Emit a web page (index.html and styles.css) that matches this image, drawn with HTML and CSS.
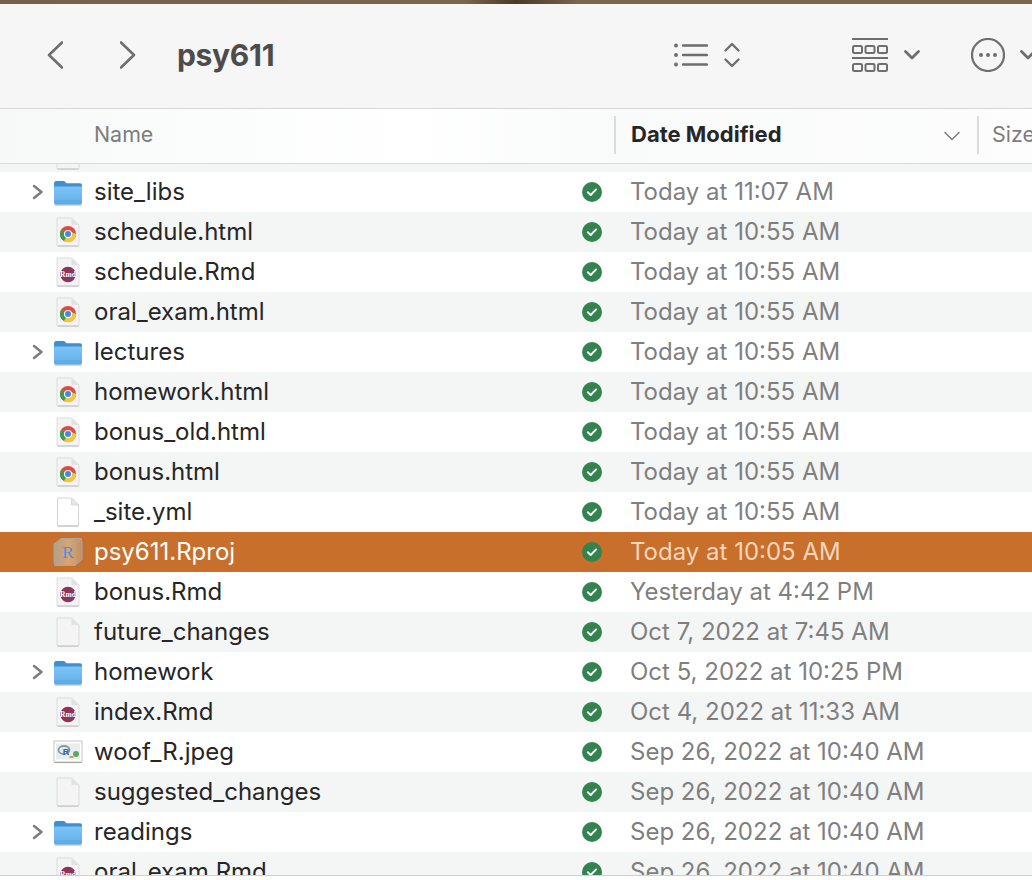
FILE: index.html
```html
<!DOCTYPE html>
<html lang="en">
<head>
<meta charset="utf-8">
<title>psy611</title>
<link rel="stylesheet" href="styles.css">
</head>
<body>
<svg class="defs" aria-hidden="true">
  <defs>
    <linearGradient id="fold" x1="0" y1="0" x2="0" y2="1"><stop offset="0" stop-color="#7cc4f5"/><stop offset="1" stop-color="#62aeea"/></linearGradient>
    <linearGradient id="cube" x1="0" y1="0" x2="1" y2="0"><stop offset="0" stop-color="#b3a08c"/><stop offset=".55" stop-color="#dba371"/><stop offset="1" stop-color="#bd8f68"/></linearGradient>
    <symbol id="folder" viewBox="0 0 30 30">
      <path d="M1 6.500C1 5 2 4 3.300 4h7c1 0 1.500.4 2.200 1.200l1 1.100H27c1.300 0 2 .8 2 2V12H1z" fill="#3f8fd6"/>
      <path d="M1 9.500h28v16.300c0 1.200-.8 2-2 2H3c-1.200 0-2-.8-2-2z" fill="url(#fold)"/>
      <path d="M1 24h28M1 26h28" stroke="#5a9fd8" stroke-width=".7" opacity=".7"/>
      <path d="M1.500 28.300h27" stroke="#9a9a9a" stroke-width=".7" opacity=".7"/>
    </symbol>
    <symbol id="doc" viewBox="0 0 30 30">
      <path d="M4.500 1h14l7 7v20.500h-21z" fill="#fff" stroke="#d4d4d4" stroke-width="1"/>
      <path d="M18.500 1v7h7z" fill="#e6e6e6" stroke="#d4d4d4" stroke-width=".8"/>
      <path d="M5 29.300h20" stroke="#bbb" stroke-width=".8"/>
    </symbol>
    <symbol id="docgrey" viewBox="0 0 30 30">
      <path d="M4 1h14.500l7.500 7v20.500H4z" fill="#f4f4f4" stroke="#dcdcdc" stroke-width="1"/>
      <path d="M18.500 1v7H26z" fill="#e2e2e2"/>
      <path d="M4.500 29.300h21" stroke="#bbb" stroke-width=".8"/>
    </symbol>
    <symbol id="chrome" viewBox="0 0 30 30">
      <use href="#docgrey"/>
      <circle cx="15" cy="17" r="8" fill="#dd4b3e"/>
      <path d="M8 13 15 17l-4 7A8 8 0 0 1 8 13z" fill="#3a9d50"/>
      <path d="M23 17a8 8 0 0 1-12 7l4-7 3.500-2z" fill="#f6c53a"/>
      <circle cx="15" cy="17" r="4" fill="#fff"/>
      <circle cx="15" cy="17" r="3" fill="#4a84ea"/>
    </symbol>
    <symbol id="rmd" viewBox="0 0 30 30">
      <use href="#docgrey"/>
      <circle cx="15" cy="17.500" r="7.800" fill="#8f3358"/>
      <text x="15" y="20" text-anchor="middle" class="rmd-label">Rmd</text>
    </symbol>
    <symbol id="rproj" viewBox="0 0 30 30">
      <path d="M8 1.500h20l1 4v17l-7 6H2l-1-4V7z" fill="url(#cube)" stroke="#a7a7a7" stroke-width="1"/>
      <path d="M1 7h21v21.500M22 7l7-5.500" fill="none" stroke="#c2a68c" stroke-width=".8"/>
      <text x="15" y="21" text-anchor="middle" class="rproj-label">R</text>
    </symbol>
    <symbol id="jpeg" viewBox="0 0 30 30">
      <rect x="1" y="4" width="28" height="21" fill="#fff" stroke="#c6c6c6"/>
      <rect x="3" y="6.500" width="24" height="16" fill="#e8edf0"/>
      <ellipse cx="11" cy="13" rx="5.500" ry="4" fill="none" stroke="#8d949c" stroke-width="1.800"/>
      <text x="13" y="18" text-anchor="middle" class="jpeg-label">R</text>
      <circle cx="23" cy="17" r="3" fill="#5aa662"/>
      <rect x="16.500" y="19" width="4" height="2" fill="#e0963c"/>
      <path d="M1.500 25.600h27" stroke="#8f8f8f" stroke-width=".8"/>
    </symbol>
    <symbol id="sync" viewBox="0 0 20 20">
      <circle cx="10" cy="10" r="10" fill="#33834f"/>
      <path d="M5.800 10.300l2.900 2.700 5.400-5.600" fill="none" stroke="#fff" stroke-width="1.900" stroke-linecap="round" stroke-linejoin="round"/>
    </symbol>
    <symbol id="disc" viewBox="0 0 12 16">
      <path d="M2 2l7.500 6L2 14" fill="none" stroke="#7a7a7a" stroke-width="2.400" stroke-linecap="round" stroke-linejoin="round"/>
    </symbol>
  </defs>
</svg>

<div class="wallpaper"></div>

<header class="toolbar">
  <svg class="nav nav-back" viewBox="0 0 16 28"><path d="M15 1.500 2 14l13 12.500"/></svg>
  <svg class="nav nav-fwd" viewBox="0 0 16 28"><path d="M1 1.500 14 14 1 26.500"/></svg>
  <h1 class="title">psy611</h1>
  <svg class="tool tool-list" viewBox="0 0 34 24">
    <circle cx="2" cy="2.500" r="2"/><circle cx="2" cy="12" r="2"/><circle cx="2" cy="21.500" r="2"/>
    <path d="M9 2.500h24M9 12h24M9 21.500h24"/>
  </svg>
  <svg class="tool tool-updown" viewBox="0 0 16 26"><path d="M1.500 8.500 8 2l6.500 6.500M1.500 17.500 8 24l6.500-6.500"/></svg>
  <svg class="tool tool-grid" viewBox="0 0 36 34">
    <path d="M0 1h36M0 20h36"/>
    <rect x="1" y="8" width="9" height="7" rx="1.500"/><rect x="13.500" y="8" width="9" height="7" rx="1.500"/><rect x="26" y="8" width="9" height="7" rx="1.500"/>
    <rect x="1" y="26" width="9" height="7" rx="1.500"/><rect x="13.500" y="26" width="9" height="7" rx="1.500"/><rect x="26" y="26" width="9" height="7" rx="1.500"/>
  </svg>
  <svg class="tool tool-chev" viewBox="0 0 16 10"><path d="M1.500 1.500 8 8l6.500-6.500"/></svg>
  <svg class="tool tool-more" viewBox="0 0 34 34">
    <circle cx="17" cy="17" r="16"/>
    <circle class="dot" cx="10" cy="17" r="2"/><circle class="dot" cx="17" cy="17" r="2"/><circle class="dot" cx="24" cy="17" r="2"/>
  </svg>
  <svg class="tool tool-chev tool-chev-end" viewBox="0 0 16 10"><path d="M1.500 1.500 8 8l6.500-6.500"/></svg>
</header>

<div class="colhead">
  <span class="col col-name">Name</span>
  <span class="col col-date">Date Modified</span>
  <svg class="sort" viewBox="0 0 16 10"><path d="M1 1.500 8 8.500l7-7"/></svg>
  <span class="col col-size">Size</span>
</div>

<main class="list">
  <div class="peek">
    <svg class="ico peek-ico"><use href="#docgrey"/></svg>
  </div>
  <div class="row"><svg class="disc"><use href="#disc"/></svg><svg class="ico"><use href="#folder"/></svg><span class="name">site_libs</span><svg class="sync"><use href="#sync"/></svg><span class="date">Today at 11:07 AM</span></div>
  <div class="row alt"><svg class="ico"><use href="#chrome"/></svg><span class="name">schedule.html</span><svg class="sync"><use href="#sync"/></svg><span class="date">Today at 10:55 AM</span></div>
  <div class="row"><svg class="ico"><use href="#rmd"/></svg><span class="name">schedule.Rmd</span><svg class="sync"><use href="#sync"/></svg><span class="date">Today at 10:55 AM</span></div>
  <div class="row alt"><svg class="ico"><use href="#chrome"/></svg><span class="name">oral_exam.html</span><svg class="sync"><use href="#sync"/></svg><span class="date">Today at 10:55 AM</span></div>
  <div class="row"><svg class="disc"><use href="#disc"/></svg><svg class="ico"><use href="#folder"/></svg><span class="name">lectures</span><svg class="sync"><use href="#sync"/></svg><span class="date">Today at 10:55 AM</span></div>
  <div class="row alt"><svg class="ico"><use href="#chrome"/></svg><span class="name">homework.html</span><svg class="sync"><use href="#sync"/></svg><span class="date">Today at 10:55 AM</span></div>
  <div class="row"><svg class="ico"><use href="#chrome"/></svg><span class="name">bonus_old.html</span><svg class="sync"><use href="#sync"/></svg><span class="date">Today at 10:55 AM</span></div>
  <div class="row alt"><svg class="ico"><use href="#chrome"/></svg><span class="name">bonus.html</span><svg class="sync"><use href="#sync"/></svg><span class="date">Today at 10:55 AM</span></div>
  <div class="row"><svg class="ico"><use href="#doc"/></svg><span class="name">_site.yml</span><svg class="sync"><use href="#sync"/></svg><span class="date">Today at 10:55 AM</span></div>
  <div class="row selected"><svg class="ico"><use href="#rproj"/></svg><span class="name">psy611.Rproj</span><svg class="sync"><use href="#sync"/></svg><span class="date">Today at 10:05 AM</span></div>
  <div class="row"><svg class="ico"><use href="#rmd"/></svg><span class="name">bonus.Rmd</span><svg class="sync"><use href="#sync"/></svg><span class="date">Yesterday at 4:42 PM</span></div>
  <div class="row alt"><svg class="ico"><use href="#docgrey"/></svg><span class="name">future_changes</span><svg class="sync"><use href="#sync"/></svg><span class="date">Oct 7, 2022 at 7:45 AM</span></div>
  <div class="row"><svg class="disc"><use href="#disc"/></svg><svg class="ico"><use href="#folder"/></svg><span class="name">homework</span><svg class="sync"><use href="#sync"/></svg><span class="date">Oct 5, 2022 at 10:25 PM</span></div>
  <div class="row alt"><svg class="ico"><use href="#rmd"/></svg><span class="name">index.Rmd</span><svg class="sync"><use href="#sync"/></svg><span class="date">Oct 4, 2022 at 11:33 AM</span></div>
  <div class="row"><svg class="ico"><use href="#jpeg"/></svg><span class="name">woof_R.jpeg</span><svg class="sync"><use href="#sync"/></svg><span class="date">Sep 26, 2022 at 10:40 AM</span></div>
  <div class="row alt"><svg class="ico"><use href="#docgrey"/></svg><span class="name">suggested_changes</span><svg class="sync"><use href="#sync"/></svg><span class="date">Sep 26, 2022 at 10:40 AM</span></div>
  <div class="row"><svg class="disc"><use href="#disc"/></svg><svg class="ico"><use href="#folder"/></svg><span class="name">readings</span><svg class="sync"><use href="#sync"/></svg><span class="date">Sep 26, 2022 at 10:40 AM</span></div>
  <div class="row alt"><svg class="ico"><use href="#rmd"/></svg><span class="name">oral_exam.Rmd</span><svg class="sync"><use href="#sync"/></svg><span class="date">Sep 26, 2022 at 10:40 AM</span></div>
</main>
</body>
</html>
```
FILE: styles.css
```css
* { box-sizing: border-box; }
html, body { margin: 0; padding: 0; }
body {
  width: 1032px;
  height: 880px;
  overflow: hidden;
  background: #fff;
  font-family: Inter, "Liberation Sans", sans-serif;
  color: #262626;
}
.defs { width: 0; height: 0; display: block; overflow: hidden; }

.wallpaper {
  height: 4px;
  background: linear-gradient(90deg, #75604a 0%, #7a654d 45%, #4a3a28 50%, #7a654d 56%, #7a654d 100%);
}

.toolbar {
  height: 105px;
  background: #f6f6f6;
  border-bottom: 1px solid #d6d6d6;
  display: flex;
  align-items: center;
  padding-left: 47px;
  padding-bottom: 3px;
  overflow: hidden;
}
.nav { width: 16px; height: 28px; fill: none; stroke: #6e6e6e; stroke-width: 2.600; stroke-linecap: round; stroke-linejoin: round; flex: none; }
.nav-fwd { margin-left: 57px; }
.title { margin: 0 0 0 41px; font-size: 30px; font-weight: 700; color: #4c4c4c; letter-spacing: -.3px; width: 220px; flex: none; }
.tool { flex: none; fill: none; stroke: #6e6e6e; stroke-width: 2.400; stroke-linecap: round; stroke-linejoin: round; }
.tool-list { width: 34px; height: 24px; margin-left: 277px; }
.tool-list circle { fill: #6e6e6e; stroke: none; }
.tool-updown { width: 16px; height: 26px; margin-left: 16px; }
.tool-grid { width: 36px; height: 34px; margin-left: 112px; stroke-width: 2; stroke-linecap: butt; }
.tool-chev { width: 16px; height: 10px; margin-left: 16px; stroke-width: 2.800; }
.tool-more { width: 34px; height: 34px; margin-left: 51px; stroke-width: 2.200; }
.tool-more .dot { fill: #6e6e6e; stroke: none; }
.tool-chev-end { margin-left: 15px; }

.colhead {
  height: 55px;
  background: linear-gradient(90deg, #f7f8f8 0%, #fbfcfc 20%, #fff 40%, #f9fafa 60%, #fdfdfd 100%);
  border-bottom: 1px solid #d9d9d9;
  display: flex;
  align-items: center;
  font-size: 21.400px;
  overflow: hidden;
  padding-bottom: 2px;
}
.col { flex: none; white-space: nowrap; }
.col-name { margin-left: 94px; width: 520px; margin-top: -2px; color: #7d7d7d; font-weight: 400; }
.col-date { width: 330px; height: 38px; line-height: 36px; padding-left: 15px; border-left: 2px solid #dcdcdc; font-weight: 700; color: #262626; font-size: 22px; }
.sort { width: 16px; height: 10px; flex: none; fill: none; stroke: #7a7a7a; stroke-width: 1.500; stroke-linecap: round; stroke-linejoin: round; margin-top: 2px; }
.col-size { margin-left: 17px; height: 38px; line-height: 36px; padding-left: 13px; border-left: 2px solid #dcdcdc; color: #7d7d7d; }

.list { height: 712px; overflow: hidden; border-bottom: 1px solid #d0d0d0; }
.peek { height: 8px; background: #f4f5f5; padding-left: 53px; overflow: hidden; position: relative; }
.peek-ico { margin-top: -24px; }

.row {
  height: 40px;
  display: flex;
  align-items: center;
  padding-left: 53px;
  position: relative;
  font-size: 24px;
  background: #fff;
}
.row.alt { background: #f4f5f5; }
.row.selected { background: #c96f2c; color: #fff; }
.disc { position: absolute; left: 32px; top: 12px; width: 12px; height: 16px; }
.ico { width: 30px; height: 30px; flex: none; display: block; }
.name { margin-left: 11px; margin-top: -2px; width: 488px; flex: none; white-space: nowrap; }
.sync { width: 20px; height: 20px; flex: none; }
.date { margin-left: 28px; margin-top: -2px; color: #7f7f7f; white-space: nowrap; }
.selected .date { color: #f4d5bd; }

.rmd-label { font-family: "Liberation Serif", serif; font-size: 7.500px; font-weight: 700; fill: #fff; }
.rproj-label { font-family: "Liberation Serif", serif; font-size: 17px; fill: #4f8fdc; }
.jpeg-label { font-family: "Liberation Sans", sans-serif; font-size: 9px; font-weight: 700; fill: #2a63b0; }
```
